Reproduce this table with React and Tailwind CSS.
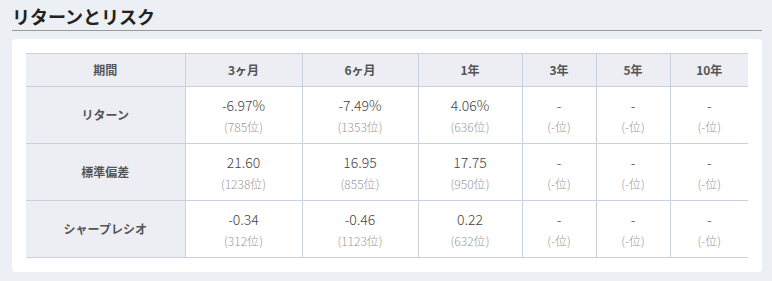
const columns = ["3ヶ月", "6ヶ月", "1年", "3年", "5年", "10年"];
const widths = ["w-[159px]", "w-[117px]", "w-[116px]", "w-[104px]", "w-[74px]", "w-[74px]", "w-[78px]"];

const rows = [
  {
    label: "リターン",
    cells: [
      ["-6.97%", "785位"],
      ["-7.49%", "1353位"],
      ["4.06%", "636位"],
      ["-", "-位"],
      ["-", "-位"],
      ["-", "-位"],
    ],
  },
  {
    label: "標準偏差",
    cells: [
      ["21.60", "1238位"],
      ["16.95", "855位"],
      ["17.75", "950位"],
      ["-", "-位"],
      ["-", "-位"],
      ["-", "-位"],
    ],
  },
  {
    label: "シャープレシオ",
    cells: [
      ["-0.34", "312位"],
      ["-0.46", "1123位"],
      ["0.22", "632位"],
      ["-", "-位"],
      ["-", "-位"],
      ["-", "-位"],
    ],
  },
];

export default function App() {
  return (
    <div
      className="min-h-screen w-[772px] bg-[#eceff3] pl-3 pr-[10px] pt-[5px]"
      style={{ fontFamily: '"Noto Sans CJK JP", "Noto Sans", sans-serif' }}
    >
      <h2 className="border-b border-[#999] pb-[2px] text-[18px] font-bold leading-[23px] text-[#222]">
        リターンとリスク
      </h2>
      <div className="mt-2 rounded-[4px] bg-white px-[14px] pb-[14px] pt-[14px]">
        <table className="w-[722px] table-fixed border-collapse text-center">
          <thead>
            <tr className="h-[33px] border-y border-[#c9d1df] bg-[#eceef4]">
              <th className={`${widths[0]} border-r border-[#c9d1df] text-[12px] font-bold text-[#555]`}>
                期間
              </th>
              {columns.map((c, i) => (
                <th
                  key={c}
                  className={`${widths[i + 1]} ${i < columns.length - 1 ? "border-r border-[#c9d1df]" : ""} text-[12px] font-bold text-[#555]`}
                >
                  {c}
                </th>
              ))}
            </tr>
          </thead>
          <tbody>
            {rows.map((r) => (
              <tr key={r.label} className="h-[57px] border-b border-[#c9d1df]">
                <td className="border-r border-[#c9d1df] bg-[#eceef4] text-[12px] font-bold text-[#555]">
                  {r.label}
                </td>
                {r.cells.map(([v, rank], i) => (
                  <td
                    key={i}
                    className={`${i < r.cells.length - 1 ? "border-r border-[#c9d1df]" : ""} align-middle font-light`}
                  >
                    <div className="text-[14px] leading-[20px] text-[#444]">{v}</div>
                    <div className="mt-[4px] text-[12px] leading-[16px] text-[#999]">({rank})</div>
                  </td>
                ))}
              </tr>
            ))}
          </tbody>
        </table>
      </div>
    </div>
  );
}
